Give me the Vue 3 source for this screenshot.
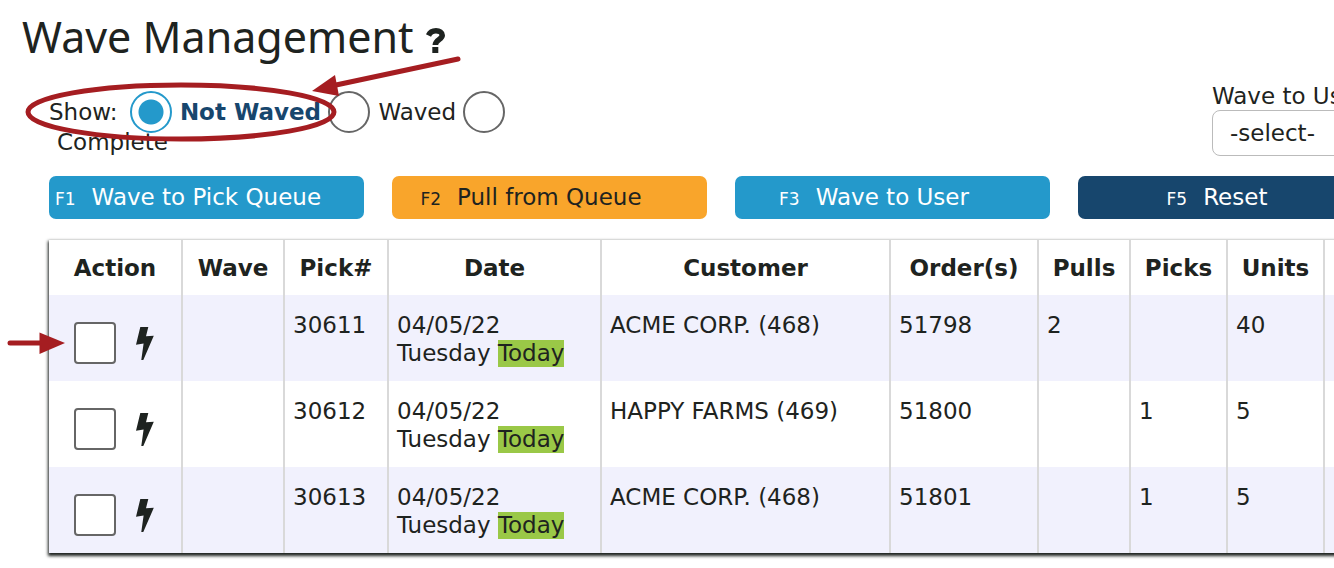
<script setup>
import { ref } from 'vue'

const show = ref('not-waved')
const user = ref('')
const selected = ref([])

const filters = [
  { value: 'not-waved', label: 'Not Waved' },
  { value: 'waved', label: 'Waved' },
  { value: 'complete', label: 'Complete' },
]

const actions = [
  { key: 'F1', label: 'Wave to Pick Queue', tone: 'blue' },
  { key: 'F2', label: 'Pull from Queue', tone: 'orange' },
  { key: 'F3', label: 'Wave to User', tone: 'blue' },
  { key: 'F5', label: 'Reset', tone: 'navy' },
]

const columns = [
  { id: 'action', label: 'Action' },
  { id: 'wave', label: 'Wave' },
  { id: 'pick', label: 'Pick#' },
  { id: 'date', label: 'Date' },
  { id: 'customer', label: 'Customer' },
  { id: 'orders', label: 'Order(s)' },
  { id: 'pulls', label: 'Pulls' },
  { id: 'picks', label: 'Picks' },
  { id: 'units', label: 'Units' },
  { id: 'more', label: '' },
]

const rows = [
  { pick: '30611', customer: 'ACME CORP. (468)', order: '51798', pulls: '2', picks: '', units: '40' },
  { pick: '30612', customer: 'HAPPY FARMS (469)', order: '51800', pulls: '', picks: '1', units: '5' },
  { pick: '30613', customer: 'ACME CORP. (468)', order: '51801', pulls: '', picks: '1', units: '5' },
]
</script>

<template>
  <main class="page">
    <h1 class="title">
      Wave Management
      <svg class="help" viewBox="0 0 18 25" role="img" aria-label="Help">
        <path d="M1.500 7.500C3 4.300 5.500 2.800 9 2.800C12.500 2.800 15.200 4.500 15.200 7.300C15.200 11.500 8.500 11.500 8.300 17" />
        <path class="dot" d="M5.300 19h6v6h-6z" />
      </svg>
    </h1>

    <section class="filters">
      <div class="show" role="radiogroup" aria-label="Show">
        <span class="caption">Show:</span>{{ ' ' }}
        <template v-for="f in filters" :key="f.value">
          <input :id="f.value" v-model="show" class="radio" type="radio" name="show" :value="f.value" />
          <label class="radio-label" :for="f.value">{{ f.label }}</label>{{ ' ' }}
        </template>
      </div>
      <div class="user">
        <label for="user">Wave to User</label>
        <select id="user" v-model="user">
          <option value="">-select-</option>
        </select>
      </div>
    </section>

    <nav class="actions">
      <button v-for="a in actions" :key="a.key" type="button" :class="a.tone">
        <small>{{ a.key }}</small>{{ a.label }}
      </button>
    </nav>

    <table class="grid">
      <colgroup>
        <col v-for="c in columns" :key="c.id" :class="'col-' + c.id" />
      </colgroup>
      <thead>
        <tr>
          <th v-for="c in columns" :key="c.id" scope="col">{{ c.label }}</th>
        </tr>
      </thead>
      <tbody>
        <tr v-for="r in rows" :key="r.pick">
          <td>
            <div class="row-action">
              <input v-model="selected" type="checkbox" :value="r.pick" :aria-label="'Select pick ' + r.pick" />
              <svg class="bolt" viewBox="0 0 18 33" aria-hidden="true">
                <path d="M4.300 0H12.300L10 9.200L17.800 8.800L7.300 33H5.300L7.600 16.600L0 17.800Z" />
              </svg>
            </div>
          </td>
          <td></td>
          <td>{{ r.pick }}</td>
          <td>04/05/22<br />Tuesday <mark>Today</mark></td>
          <td>{{ r.customer }}</td>
          <td>{{ r.order }}</td>
          <td>{{ r.pulls }}</td>
          <td>{{ r.picks }}</td>
          <td>{{ r.units }}</td>
          <td></td>
        </tr>
      </tbody>
    </table>

    <svg class="notes" width="480" height="380" viewBox="0 0 480 380" aria-hidden="true">
      <ellipse cx="181" cy="112" rx="153" ry="27" />
      <path class="line" d="M458 59L336 85" />
      <path class="head" d="M312 91L335 75L339 96Z" />
      <path class="line" d="M10 343H42" />
      <path class="head" d="M39.500 332.500L65 343L39.500 354Z" />
    </svg>
  </main>
</template>

<style>
body {
  margin: 0;
  background: #fff;
}
</style>

<style scoped>
.page {
  position: relative;
  box-sizing: border-box;
  overflow: hidden;
  padding: 0 0 24px 49px;
  color: #1e2320;
  font: 23px/28px "DejaVu Sans", Verdana, sans-serif;
}
.title {
  margin: 0 0 0 -27px;
  padding-top: 6px;
  font: 400 43px/62px "Noto Sans", "Open Sans", sans-serif;
}
.help {
  width: 18px;
  height: 25px;
  margin-left: 2px;
  overflow: visible;
}
.help path {
  fill: none;
  stroke: #1e2320;
  stroke-width: 5.600;
}
.help .dot {
  fill: #1e2320;
  stroke: none;
}
.filters {
  display: flex;
  justify-content: space-between;
  margin-right: -80px;
  padding-top: 14px;
}
.show {
  width: 510px;
  padding-top: 16px;
}
.caption {
  margin-right: 5px;
}
.radio {
  appearance: none;
  box-sizing: border-box;
  width: 42px;
  height: 42px;
  margin: -8px 0 -5px;
  border: 2px solid #666;
  border-radius: 50%;
  background: #fff;
  vertical-align: middle;
}
.radio:checked {
  border-color: #2499cb;
  background: radial-gradient(circle, #2499cb 12px, #fff 13px);
}
.radio-label {
  margin-left: 8px;
}
.radio:checked + .radio-label {
  color: #17466d;
  font-weight: 700;
}
.user {
  display: flex;
  flex-direction: column;
  width: 202px;
}
.user select {
  appearance: none;
  box-sizing: border-box;
  height: 46px;
  padding: 0 17px;
  border: 1px solid #bbb;
  border-radius: 8px;
  background: #fff;
  color: inherit;
  font: inherit;
}
.actions {
  display: grid;
  grid-template-columns: repeat(4, minmax(0, 1fr));
  gap: 28px;
  margin: 20px -59px 21px 0;
}
.actions button {
  height: 43px;
  padding: 1px 43px 0 6px;
  border: 0;
  border-radius: 7px;
  color: #fff;
  font: inherit;
  white-space: nowrap;
}
.actions small {
  margin-right: 16px;
  font-size: 17px;
}
.actions .blue {
  background: #2499cb;
}
.actions .orange {
  background: #f9a52b;
  color: #1e2320;
}
.actions .navy {
  background: #17466d;
}
.grid {
  width: calc(100% + 60px);
  border-collapse: separate;
  border-spacing: 0;
  table-layout: fixed;
  box-shadow: 0 2px 3px 1px #1e2320;
}
.col-action { width: 134px; }
.col-wave { width: 102px; }
.col-pick { width: 104px; }
.col-date { width: 213px; }
.col-customer { width: 289px; }
.col-orders { width: 148px; }
.col-pulls { width: 92px; }
.col-picks { width: 97px; }
.col-units { width: 97px; }
th,
td {
  box-sizing: border-box;
  border-right: 2px solid #d9d9d9;
  background: #fff;
}
th {
  height: 55px;
  padding: 0;
}
td {
  height: 86px;
  padding: 16px 8px 14px;
  text-align: left;
  vertical-align: top;
}
tbody tr:nth-child(odd) td {
  background: #f1f1fd;
}
mark {
  padding-bottom: 1px;
  background: #9ac847;
  color: inherit;
}
.row-action {
  display: flex;
  align-items: center;
  gap: 20px;
  padding: 11px 0 0 17px;
}
.row-action input {
  appearance: none;
  box-sizing: border-box;
  width: 42px;
  height: 42px;
  margin: 0;
  border: 2px solid #666;
  border-radius: 4px;
  background: #fff;
}
.bolt {
  width: 18px;
  height: 33px;
  fill: #1e2320;
}
.notes {
  position: absolute;
  top: 0;
  left: 0;
  pointer-events: none;
}
.notes ellipse,
.notes .line {
  fill: none;
  stroke: #a51d21;
  stroke-width: 5;
  stroke-linecap: round;
}
.notes .head {
  fill: #a51d21;
}
</style>
